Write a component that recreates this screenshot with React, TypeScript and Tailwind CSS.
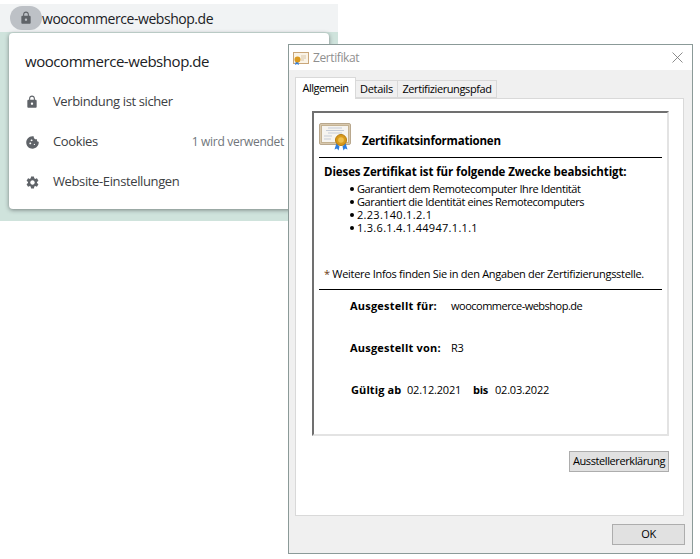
import { MdCookie, MdLock, MdSettings } from 'react-icons/md'

const winFont = { fontFamily: '"Open Sans", sans-serif' }

function CertIcon({ small }: { small?: boolean }) {
  if (small) {
    return (
      <svg width="16" height="16" viewBox="0 0 16 16">
        <rect x="0.5" y="2.5" width="15" height="11" fill="#faf3e6" stroke="#c9a679" />
        <path d="M8 6h5M8 8h5M8 10h3" stroke="#d9c6a8" />
        <path d="M3 11l-1 4 2-1 2 1-1-4z" fill="#2f7fe0" />
        <circle cx="4.5" cy="9.5" r="3" fill="#dc9a1e" />
      </svg>
    )
  }
  return (
    <svg width="32" height="28" viewBox="0 0 32 28">
      <rect x="0.5" y="0.5" width="31" height="21" rx="1.5" fill="#d8c8ae" stroke="#b9a88e" />
      <rect x="2.5" y="2.5" width="27" height="17" fill="#f6f4f0" stroke="#c4b292" />
      <path d="M9 5h14M7 7.5h18M9 10h14M5 13h8M5 16h7" stroke="#c5cbd6" />
      <path d="M17.5 20l-2 6.5 2.5-1 1.5 2 1-4z" fill="#2d7de0" />
      <path d="M26.5 20l2 6.5-2.5-1-1.5 2-1-4z" fill="#2d7de0" />
      <circle cx="22" cy="17" r="5.5" fill="#d99a1c" stroke="#b57c10" />
      <circle cx="22" cy="17" r="2.8" fill="#efc04e" />
    </svg>
  )
}

function PopupRow({ icon, label, right }: { icon: React.ReactNode; label: string; right?: string }) {
  return (
    <div className="flex h-10 items-center pt-[2px] text-[13px] tracking-[-0.38px] text-[#3c4043]">
      <span className="flex w-7 shrink-0 items-center text-[#5f6368]">{icon}</span>
      <span>{label}</span>
      {right && <span className="ml-auto mr-[29px] text-[12px] tracking-[-0.3px] text-[#70757a]">{right}</span>}
    </div>
  )
}

function Purpose({ text, numeric }: { text: string; numeric?: boolean }) {
  return (
    <li className="flex h-[13px] items-center gap-[3px] leading-[13px]">
      <span className="size-[4px] rounded-full bg-black" />
      {numeric ? <span className="tracking-[0.3px]">{text}</span> : <span className="tracking-[-0.4px]">{text}</span>}
    </li>
  )
}

function Rule() {
  return <div className="mx-[5px] h-px bg-black" />
}

export default function App() {
  return (
    <div className="relative h-[559px] w-[700px] overflow-hidden bg-white" style={winFont}>
      {/* browser address bar + page behind */}
      <div className="w-[338px] pt-1">
        <div className="flex h-7 items-center bg-[#f1f3f4] pl-[10px]">
          <div className="flex h-6 w-[32px] shrink-0 items-center justify-center rounded-full bg-[#bdc1c6] text-[#5f6368]">
            <MdLock size={14} />
          </div>
          <span className="text-[14px] tracking-[-0.45px] text-[#202124]">woocommerce-webshop.de</span>
        </div>
        <div className="h-[189px] bg-[#cfe3dc]" />
      </div>

      {/* site info popup */}
      <div className="absolute left-[9px] top-[33px] h-[176px] w-[320px] rounded-[4px] bg-white px-4 pt-[8px] shadow-[0_1px_4px_rgba(60,64,67,0.6)]">
        <div className="flex h-10 items-center text-[15px] tracking-[-0.45px] text-[#202124]">woocommerce-webshop.de</div>
        <PopupRow icon={<MdLock size={14} />} label="Verbindung ist sicher" />
        <PopupRow icon={<MdCookie size={15} />} label="Cookies" right="1 wird verwendet" />
        <PopupRow icon={<MdSettings size={15} />} label="Website-Einstellungen" />
      </div>

      {/* certificate window */}
      <div className="absolute left-[288px] top-[44px] flex h-[510px] w-[405px] flex-col border border-[#8b9a98] bg-[#f0f0f0] text-[11px] tracking-[-0.3px] text-black">
        <div className="flex h-[25px] shrink-0 items-center bg-white pl-[4px] pr-[9px]">
          <CertIcon small />
          <span className="ml-[4px] text-[12px] tracking-[-0.4px] text-[#8f8f8f]">Zertifikat</span>
          <svg className="ml-auto" width="11" height="11" viewBox="0 0 11 11">
            <path d="M0.5 0.5l10 10M10.5 0.5l-10 10" stroke="#707070" strokeWidth="0.8" />
          </svg>
        </div>

        <div className="ml-[6px] mr-[8px] mt-[7px] flex h-[21px] items-end">
          <div className="relative z-10 -mb-px flex h-[22px] w-[61px] items-center justify-center border border-b-0 border-[#d9d9d9] bg-white tracking-[-0.5px]">Allgemein</div>
          <div className="flex h-[18px] w-[42px] items-center justify-center border border-l-0 border-[#d9d9d9]">Details</div>
          <div className="flex h-[18px] w-[99px] items-center justify-center border border-l-0 border-[#d9d9d9] tracking-[-0.4px]">Zertifizierungspfad</div>
        </div>

        <div className="ml-[6px] mr-[8px] flex h-[418px] flex-col border border-[#d9d9d9] bg-white pl-4 pr-[14px] pt-[12px]">
          <div className="flex h-[325px] flex-col border-2 border-b-[#e3e3e3] border-l-[#707070] border-r-[#e3e3e3] border-t-[#707070]">
            <div className="flex h-[44px] items-end pb-[6px] pl-[5px]">
              <CertIcon />
              <span className="mb-[2px] ml-[11px] text-[11.5px] font-bold tracking-[-0.2px]">Zertifikatsinformationen</span>
            </div>
            <Rule />
            <div className="ml-[10px] mt-[6px] text-[11.5px] font-bold leading-[15px] tracking-[-0.1px]">Dieses Zertifikat ist für folgende Zwecke beabsichtigt:</div>
            <ul className="ml-[36px] mt-[3px]">
              <Purpose text="Garantiert dem Remotecomputer Ihre Identität" />
              <Purpose text="Garantiert die Identität eines Remotecomputers" />
              <Purpose numeric text="2.23.140.1.2.1" />
              <Purpose numeric text="1.3.6.1.4.1.44947.1.1.1" />
            </ul>
            <div className="ml-[10px] mt-[32px] leading-[15px]">
              <span className="text-[#6b3a10]">*</span> Weitere Infos finden Sie in den Angaben der Zertifizierungsstelle.
            </div>
            <div className="mt-[8px]"><Rule /></div>
            <div className="ml-[36px] mt-[9px] flex h-[15px] items-center">
              <span className="w-[101px] font-bold tracking-[0.2px]">Ausgestellt für:</span>
              <span className="tracking-[-0.5px]">woocommerce-webshop.de</span>
            </div>
            <div className="ml-[36px] mt-[27px] flex h-[15px] items-center">
              <span className="w-[101px] font-bold tracking-[0.2px]">Ausgestellt von:</span>
              <span>R3</span>
            </div>
            <div className="ml-[37px] mt-[27px] flex h-[15px] items-center">
              <span className="w-[56px] font-bold tracking-[0.1px]">Gültig ab</span>
              <span className="w-[66px] tracking-[-0.2px]">02.12.2021</span>
              <span className="w-[22px] font-bold">bis</span>
              <span className="tracking-[-0.2px]">02.03.2022</span>
            </div>
          </div>
          <div className="mt-[15px] flex justify-end">
            <button className="h-[21px] w-[100px] border border-[#adadad] bg-[#e1e1e1] tracking-[-0.4px]">Ausstellererklärung</button>
          </div>
        </div>

        <div className="mr-[7px] mt-[8px] flex justify-end">
          <button className="h-[21px] w-[73px] border border-[#adadad] bg-[#e1e1e1]">OK</button>
        </div>
      </div>
    </div>
  )
}
